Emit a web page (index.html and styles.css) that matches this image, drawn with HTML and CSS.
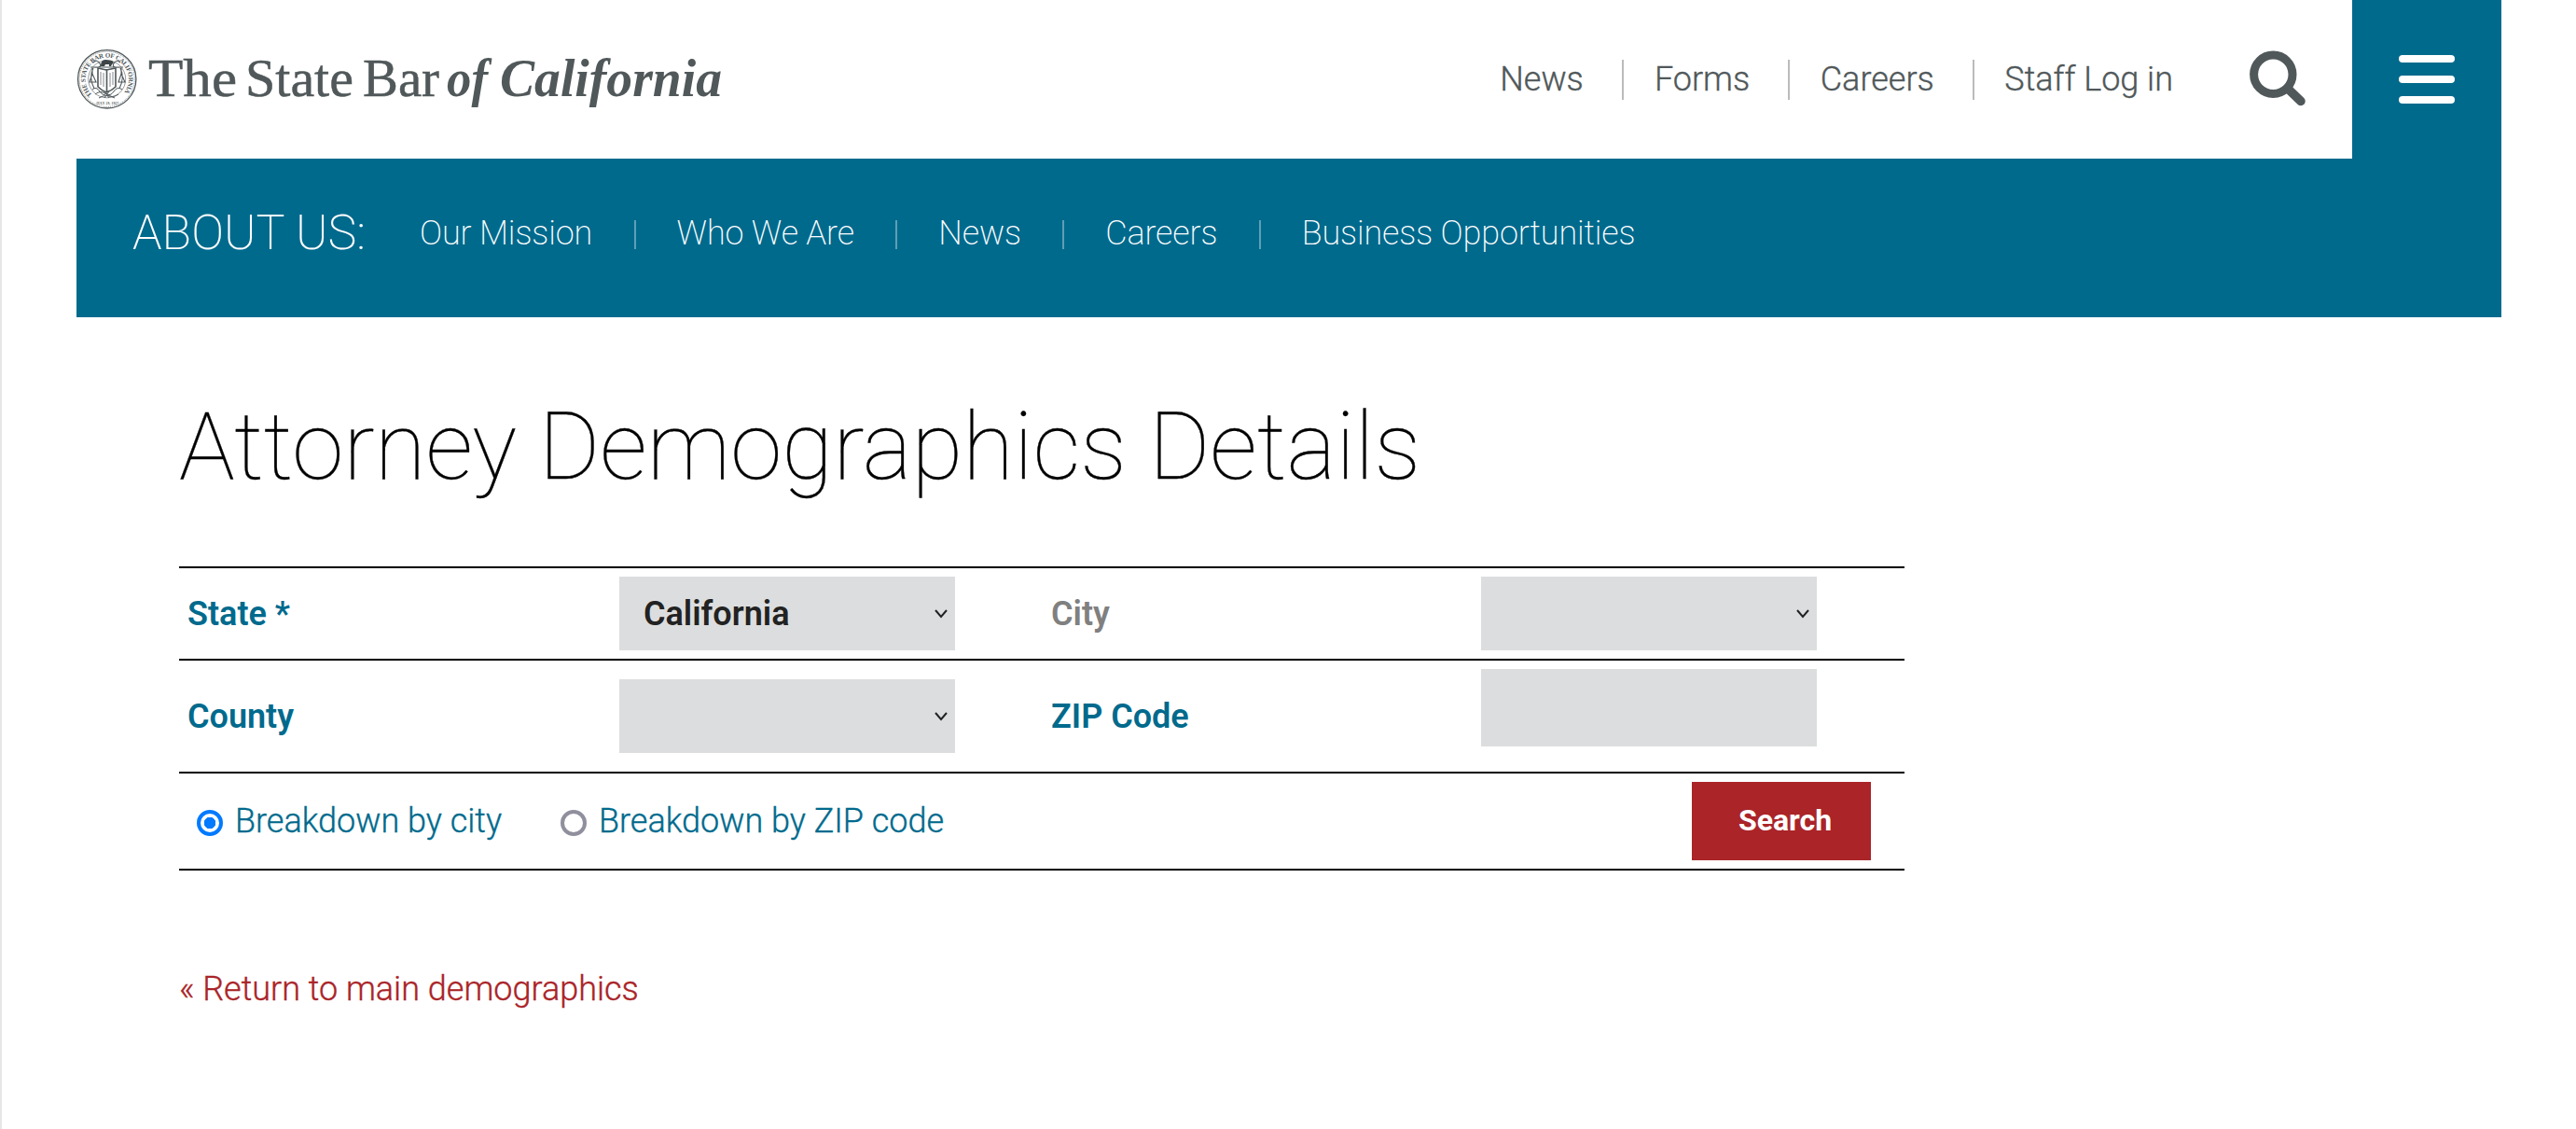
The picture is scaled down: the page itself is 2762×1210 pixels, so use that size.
FILE: index.html
```html
<!DOCTYPE html>
<html lang="en">
<head>
<meta charset="utf-8">
<title>Attorney Demographics Details</title>
<link rel="stylesheet" href="styles.css">
</head>
<body>
<div class="page">
<header class="header">
  <a class="logo">
    <svg width="710" height="80" viewBox="0 0 710 80">
      <g fill="none" stroke="#50585a">
        <circle cx="32.7" cy="39.8" r="31.2" stroke-width="1.3"/>
        <circle cx="32.7" cy="39.8" r="29.6" stroke-width=".7" stroke-dasharray="1 1"/>
        <circle cx="32.7" cy="39.8" r="20" stroke-width=".6"/>
        <path d="M15 27h35M17 28v8m31-8v8M14 43l3-9 4 9zM45 43l3-9 4 9zM18 28q-5 10 1 22M47 28q5 10-1 22M18 22q4-4 7 1t-7 4M47 22q-4-4-7 1t7 4" stroke-width="1.1"/>
        <path d="M23 28l9 2 10-2v20q-4 4-10 6-5-2-9-6zM32.500 29v25" stroke-width="1.6"/>
        <path d="M26 32v14m3-13v15m7-15v15m3-16v14" stroke-width=".7"/>
        <path d="M17 51q4-4 8 2t7 2q4 4 8-2t9-2M20 56q6-5 12 0t13 0M24 60q8-5 17 0M30 53l5 7m0-7l-5 7" stroke-width="1"/>
      </g>
      <path d="M26 26q0-7 5-7l7 1 2 2-2 2-1 2h-2v-2h-4l-1 2z" fill="#3d4547"/>
      <path id="ring" d="M16.700 56.600A23.200 23.200 0 1 1 48.700 56.600" fill="none" stroke="none"/>
      <text class="seal-text"><textPath href="#ring" textLength="106">THE STATE BAR OF CALIFORNIA</textPath></text>
      <text class="seal-small" x="21" y="66.500" textLength="24">JULY 29, 1927</text>
      <text class="brand" y="58"><tspan x="77" textLength="95" lengthAdjust="spacingAndGlyphs">The</tspan> <tspan x="181" textLength="116" lengthAdjust="spacingAndGlyphs">State</tspan> <tspan x="307" textLength="82" lengthAdjust="spacingAndGlyphs">Bar</tspan></text>
      <text class="brand brand-em" x="397" y="58" textLength="44" lengthAdjust="spacingAndGlyphs">of</text>
      <text class="brand brand-em" x="454" y="58" textLength="238" lengthAdjust="spacingAndGlyphs">California</text>
    </svg>
  </a>
  <nav class="top-nav">
    <a>News</a><a>Forms</a><a>Careers</a><a>Staff Log in</a>
  </nav>
  <svg class="search-icon" width="62" height="62" viewBox="0 0 62 62" fill="none" stroke="#50585a">
    <circle cx="26.300" cy="26.700" r="20.700" stroke-width="9"/>
    <path d="M42 42L56 55.500" stroke-width="9.500" stroke-linecap="round"/>
  </svg>
  <div class="menu"><span></span><span></span><span></span></div>
</header>
<nav class="about">
  <span class="about-title">ABOUT US:</span>
  <a>Our Mission</a><i></i><a>Who We Are</a><i></i><a>News</a><i></i><a>Careers</a><i></i><a>Business Opportunities</a>
</nav>
<main class="main">
  <h1>Attorney Demographics Details</h1>
  <form class="form">
    <div class="row">
      <label>State *</label>
      <div class="select"><span>California</span><svg width="16" height="12" viewBox="0 0 16 12"><path d="M2 2l6 7 6-7" fill="none" stroke="#222" stroke-width="2"/></svg></div>
      <label class="muted">City</label>
      <div class="select"><span></span><svg width="16" height="12" viewBox="0 0 16 12"><path d="M2 2l6 7 6-7" fill="none" stroke="#222" stroke-width="2"/></svg></div>
    </div>
    <div class="row row-tall">
      <label>County</label>
      <div class="select"><span></span><svg width="16" height="12" viewBox="0 0 16 12"><path d="M2 2l6 7 6-7" fill="none" stroke="#222" stroke-width="2"/></svg></div>
      <label>ZIP Code</label>
      <div class="input"></div>
    </div>
    <div class="actions">
      <span class="radio on"></span><span class="opt opt-city">Breakdown by city</span>
      <span class="radio"></span><span class="opt">Breakdown by ZIP code</span>
      <span class="button">Search</span>
    </div>
  </form>
  <a class="back">« Return to main demographics</a>
</main>
</div>
</body>
</html>
```
FILE: styles.css
```css
* { box-sizing: border-box; }
body {
  margin: 0;
  background: #fff;
  font-family: Roboto, "Liberation Sans", sans-serif;
  font-size: 36px;
  font-weight: 300;
}
.page {
  height: 1210px;
  padding: 0 80px;
  border-left: 2px solid #e6e6e6;
  overflow: hidden;
}
.header { display: flex; height: 170px; }
.logo { width: 710px; padding-top: 45px; }
.logo svg { display: block; }
.brand { font-family: "Liberation Serif", serif; font-size: 58px; font-weight: 400; fill: #50585a; stroke: #50585a; stroke-width: .5px; }
.brand-em { font-style: italic; font-weight: 700; stroke: none; }
.seal-text { font: 700 7px "Liberation Serif", serif; fill: #50585a; }
.seal-small { font: 700 3.5px "Liberation Serif", serif; fill: #50585a; }
.top-nav, .opt, .back, h1 { -webkit-text-stroke: .35px currentColor; }
.top-nav {
  display: flex;
  align-items: center;
  margin-left: auto;
  color: #50585a;
}
.top-nav a {
  height: 43px;
  padding: 0 41px 0 33px;
  border-right: 2px solid #bbb;
  line-height: 43px;
  white-space: nowrap;
}
.top-nav a:nth-child(3) { padding-right: 41px; padding-left: 32.500px; }
.top-nav a:last-child { border: 0; padding: 0 0 0 32.500px; }
.search-icon { margin: 53px 49px 0 81px; flex: none; }
.menu {
  display: flex;
  flex-direction: column;
  gap: 14px;
  width: 160px;
  padding: 59px 50px;
  background: #006a8d;
}
.menu span { height: 8px; border-radius: 4px; background: #fff; }
.about {
  display: flex;
  align-items: center;
  height: 170px;
  padding: 0 0 11px 60px;
  background: #006a8d;
  color: #fff;
  font-weight: 200;
  white-space: nowrap;
}
.about a { letter-spacing: -.15px; }
.about-title { width: 308px; font-size: 52px; }
.about i { width: 2px; height: 31px; margin: 4px 44px 0 44.500px; background: #5f9fb5; }
.main { padding: 79px 0 0 110px; }
h1 {
  margin: 0 0 68px;
  font-size: 100px;
  font-weight: 100;
  line-height: 120px;
  color: #000;
}
.form { width: 1850px; border-top: 2px solid #000; }
.row {
  display: grid;
  grid-template-columns: 463px 462px 461px 462px;
  align-items: center;
  height: 99px;
  border-bottom: 2px solid #000;
  color: #006a8d;
}
.row-tall { height: 121px; }
.row > * { margin-left: 9px; }
.row > label:nth-child(3) { margin-left: 10px; }
.row > :nth-child(4) { margin-left: 10px; }
.row label { font-weight: 600; }
.row .muted { color: #808080; }
.select, .input { width: 360px; height: 79px; background: #dcddde; }
.select {
  display: flex;
  align-items: center;
  justify-content: space-between;
  padding: 0 7px 0 26px;
  color: #222;
  font-weight: 600;
}
.input { height: 83px; align-self: start; margin-top: 9px; }
.actions {
  display: flex;
  align-items: center;
  height: 104px;
  padding: 0 36px 0 19px;
  border-bottom: 2px solid #000;
  color: #006a8d;
}
.radio {
  width: 28px;
  height: 28px;
  margin: 4px 13px 0 0;
  border: 4px solid #8f8f9d;
  border-radius: 50%;
}
.radio.on {
  border-color: #007aff;
  background: radial-gradient(circle, #007aff 6px, #fff 6.5px);
}
.opt-city { width: 349px; }
.button {
  width: 192px;
  height: 84px;
  margin-left: auto;
  padding-left: 50px;
  background: #aa2428;
  color: #fff;
  font-size: 32px;
  font-weight: 700;
  line-height: 83px;
}
.back { display: block; margin-top: 102px; line-height: 50px; color: #aa2428; }
```
